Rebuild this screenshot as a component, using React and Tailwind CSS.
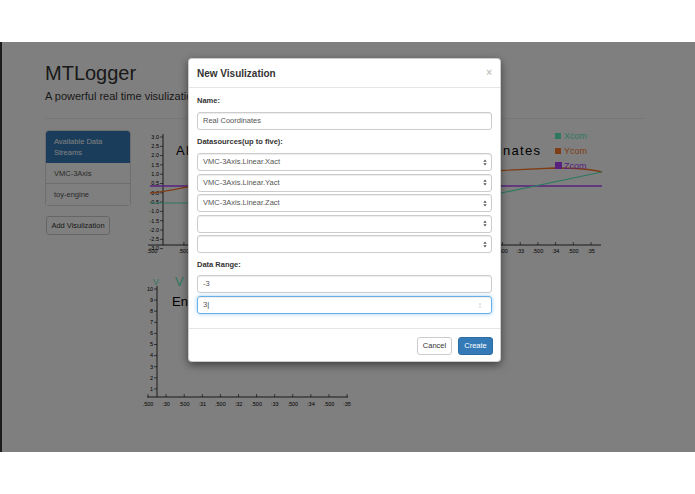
const font = { fontFamily: '"Liberation Sans", Arial, sans-serif' };

function Arrows({ className }) {
  return (
    <svg width="4" height="7" viewBox="0 0 4 7" className={className}>
      <path d="M0.3 2.8 L2 0.6 L3.7 2.8 Z" fill="#555" />
      <path d="M0.3 4.2 L2 6.4 L3.7 4.2 Z" fill="#555" />
    </svg>
  );
}

function Select({ value }) {
  return (
    <div className="h-[18px] flex items-center justify-between pl-[5px] pr-[4px] border border-[#ccc] rounded-[3px] bg-white shadow-[inset_0_1px_1px_rgba(0,0,0,0.075)] text-[7.5px] text-[#555]">
      <span>{value}</span>
      <Arrows />
    </div>
  );
}

function Label({ children, className = "" }) {
  return <div className={"text-[7.5px] leading-[10px] font-bold text-[#333] " + className}>{children}</div>;
}

const yTicks1 = [3.0, 2.5, 2.0, 1.5, 1.0, 0.5, 0.0, -0.5, -1.0, -1.5, -2.0, -2.5, -3.0];
const xTicks1 = [];
for (let i = 0; i < 24; i++) {
  const x = 591 - i * 17.7;
  const sec = 35 - Math.floor(i / 2);
  xTicks1.push({ x, label: i % 2 === 0 ? ":" + sec : ".500" });
}
const xTicks2 = [".500", ":30", ".500", ":31", ".500", ":32", ".500", ":33", ".500", ":34", ".500", ":35"];

function ChartOne() {
  const y = (v) => 137 + (3 - v) * 18.6;
  return (
    <svg width="470" height="134" viewBox="140 128 470 134" style={font}>
      <text x="176" y="155" fontSize="13" fill="#000" textLength="364" lengthAdjust="spacing">
        All Axis Positions of VMC-3Axis in Real Coordinates
      </text>
      <line x1="163" y1="134" x2="163" y2="245" stroke="#000" strokeWidth="0.8" />
      <line x1="148" y1="245" x2="601" y2="245" stroke="#000" strokeWidth="0.8" />
      {yTicks1.map((v) => (
        <g key={v}>
          <line x1="160" y1={y(v)} x2="163" y2={y(v)} stroke="#000" strokeWidth="0.6" />
          <text x="159" y={y(v) + 1.8} fontSize="5.5" textAnchor="end" fill="#000">
            {v.toFixed(1)}
          </text>
        </g>
      ))}
      {xTicks1.map((t) => (
        <g key={t.x}>
          <line x1={t.x} y1="242" x2={t.x} y2="245" stroke="#000" strokeWidth="0.6" />
          <text x={t.x} y="252.5" fontSize="5.5" textAnchor="middle" fill="#000">
            {t.label}
          </text>
        </g>
      ))}
      <text x="152" y="252.5" fontSize="5.5" textAnchor="middle" fill="#000">.500</text>
      <path d="M150 186 L602 186" stroke="#b040ff" strokeWidth="1.4" fill="none" />
      <path d="M150 193 C 175 191, 185 186, 200 185 C 300 180, 450 172, 555 168 C 575 168, 590 169, 602 172" stroke="#ff7a2a" strokeWidth="1.3" fill="none" />
      <path d="M150 203 L220 203 C 330 204, 440 205, 501 193 L602 172" stroke="#5ff0c0" strokeWidth="1.2" fill="none" />
      <rect x="555" y="133" width="6" height="6" fill="#5ff0c0" />
      <text x="564" y="139" fontSize="9" fill="#5ff0c0">Xcom</text>
      <rect x="555" y="148" width="6" height="6" fill="#ff7a2a" />
      <text x="564" y="154" fontSize="9" fill="#ff7a2a">Ycom</text>
      <rect x="555" y="162" width="7" height="7" fill="#b040ff" />
      <text x="564" y="169" fontSize="9" fill="#b040ff">Zcom</text>
    </svg>
  );
}

function ChartTwo() {
  const y = (v) => 400 - v * 11.1;
  return (
    <svg width="220" height="150" viewBox="140 262 220 150" style={font}>
      <text x="153" y="285" fontSize="9" fill="#5ff0c0">V</text>
      <text x="175" y="286" fontSize="13" fill="#5ff0c0">V</text>
      <text x="172" y="306" fontSize="13" fill="#000">Engine Speed</text>
      <line x1="157" y1="286" x2="157" y2="397" stroke="#000" strokeWidth="0.8" />
      <line x1="147" y1="397" x2="348" y2="397" stroke="#000" strokeWidth="0.8" />
      {[10, 9, 8, 7, 6, 5, 4, 3, 2, 1].map((v) => (
        <g key={v}>
          <line x1="154" y1={y(v)} x2="157" y2={y(v)} stroke="#000" strokeWidth="0.6" />
          <text x="153" y={y(v) + 1.8} fontSize="5.5" textAnchor="end" fill="#000">{v}</text>
        </g>
      ))}
      {xTicks2.map((l, i) => {
        const x = 148 + i * 18.1;
        return (
          <g key={i}>
            <line x1={x} y1="394" x2={x} y2="397" stroke="#000" strokeWidth="0.6" />
            <text x={x} y="405.5" fontSize="5.5" textAnchor="middle" fill="#000">{l}</text>
          </g>
        );
      })}
    </svg>
  );
}

export default function App() {
  return (
    <div className="w-[695px] h-[494px] bg-white flex flex-col overflow-hidden" style={font}>
      <div className="h-[42px] shrink-0" />

      <div className="relative h-[410px] shrink-0 bg-white border-l-2 border-[#1c1c1c] overflow-hidden">
        {/* page behind the dialog */}
        <div className="pl-[43px] pt-[20px]">
          <h1 className="text-[20px] leading-[22px] text-[#333]">MTLogger</h1>
          <p className="mt-[5px] text-[11px] leading-[14px] text-[#333]">A powerful real time visulization tool</p>
          <div className="mt-[15px] w-[600px] border-t border-[#eee]" />
          <div className="mt-[9px] flex gap-[9px]">
            <div className="w-[86px] mt-[2px] shrink-0">
              <div className="rounded-[3px] border border-[#ddd] text-[7.5px] leading-[11px]">
                <div className="h-[32px] px-[8px] flex items-center bg-[#337ab7] text-white rounded-t-[3px]">
                  Available Data<br />Streams
                </div>
                <div className="h-[21px] px-[8px] flex items-center border-b border-[#ddd] text-[#555] bg-white">VMC-3Axis</div>
                <div className="h-[21px] px-[8px] flex items-center text-[#555] bg-white">toy-engine</div>
              </div>
              <div className="mt-[10px] ml-[1px] w-[64px] h-[19px] flex items-center justify-center border border-[#ccc] rounded-[3px] bg-white text-[7.5px] text-[#333]">
                Add Visulization
              </div>
            </div>
            <div className="flex flex-col">
              <ChartOne />
              <ChartTwo />
            </div>
          </div>
        </div>

        {/* backdrop */}
        <div className="absolute inset-0 bg-black/50" />

        {/* dialog */}
        <div className="absolute left-[186px] top-[16px] w-[313px] bg-white rounded-[4px] border border-black/20 shadow-[0_3px_9px_rgba(0,0,0,0.5)]">
          <div className="h-[29px] px-[8px] flex items-center justify-between border-b border-[#e5e5e5]">
            <span className="text-[10px] font-bold text-[#333]">New Visulization</span>
            <span className="text-[10px] leading-none text-[#c4c4c4] font-bold">×</span>
          </div>
          <div className="px-[8px] pt-[8px] pb-[14px]">
            <Label className="mb-[6px]">Name:</Label>
            <div className="h-[18px] flex items-center px-[5px] border border-[#ccc] rounded-[3px] shadow-[inset_0_1px_1px_rgba(0,0,0,0.075)] text-[7.5px] text-[#555]">
              Real Coordinates
            </div>
            <Label className="mt-[7px] mb-[6px]">Datasources(up to five):</Label>
            <div className="flex flex-col gap-[2.5px]">
              <Select value="VMC-3Axis.Linear.Xact" />
              <Select value="VMC-3Axis.Linear.Yact" />
              <Select value="VMC-3Axis.Linear.Zact" />
              <Select value="" />
              <Select value="" />
            </div>
            <Label className="mt-[7px] mb-[5px]">Data Range:</Label>
            <div className="flex flex-col gap-[3px]">
              <div className="h-[18px] flex items-center px-[5px] border border-[#ccc] rounded-[3px] shadow-[inset_0_1px_1px_rgba(0,0,0,0.075)] text-[7.5px] text-[#555]">
                -3
              </div>
              <div className="h-[18px] flex items-center justify-between pl-[5px] pr-[9px] border border-[#66afe9] rounded-[3px] shadow-[inset_0_1px_1px_rgba(0,0,0,0.075),0_0_4px_rgba(102,175,233,0.6)] text-[7.5px] text-[#555]">
                <span>3<span className="text-[#333] font-light">|</span></span>
                <svg width="4" height="7" viewBox="0 0 4 7">
                  <path d="M0.6 2.6 L2 1 L3.4 2.6 Z" fill="#c8c8c8" />
                  <path d="M0.6 4.4 L2 6 L3.4 4.4 Z" fill="#c8c8c8" />
                </svg>
              </div>
            </div>
          </div>
          <div className="border-t border-[#e5e5e5] pt-[8px] pb-[6px] pr-[7px] flex justify-end gap-[6px]">
            <div className="w-[35px] h-[18px] flex items-center justify-center border border-[#ccc] rounded-[3px] bg-white text-[7.5px] text-[#333]">
              Cancel
            </div>
            <div className="w-[35px] h-[18px] flex items-center justify-center border border-[#2e6da4] rounded-[3px] bg-[#337ab7] text-[7.5px] text-white">
              Create
            </div>
          </div>
        </div>
      </div>

      <div className="flex-1" />
    </div>
  );
}
